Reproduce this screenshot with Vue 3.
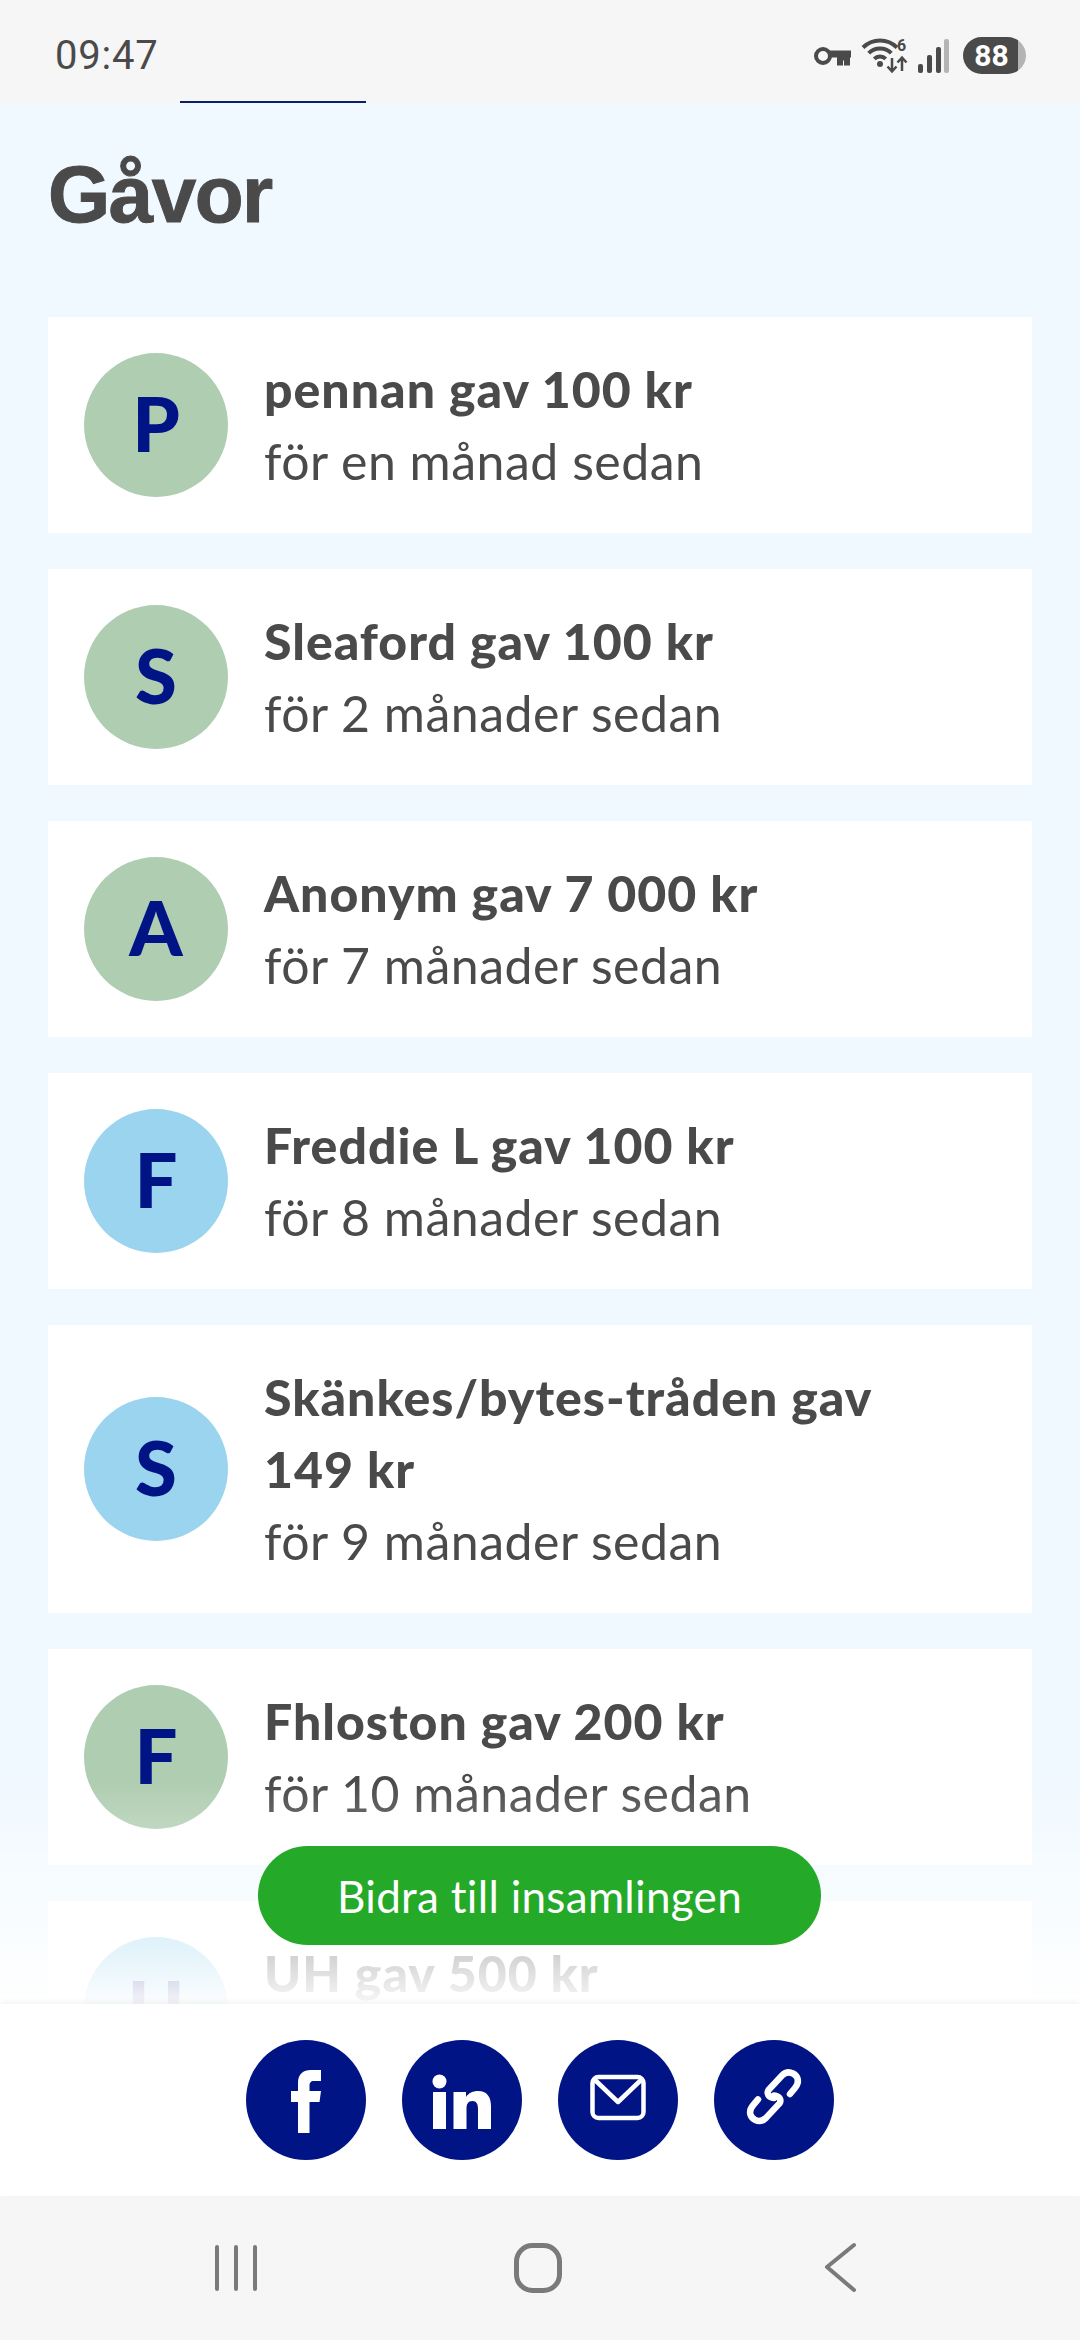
<template>
  <div class="phone">
    <header class="status">
      <span class="status__time">09:47</span>
      <div class="status__icons">
        <svg class="status__key" width="38" height="20" viewBox="0 0 38 20">
          <circle cx="9" cy="9" r="7" fill="none" stroke="#4a4a4a" stroke-width="4" />
          <path d="M15 3.500h22v7h-1v8h-6v-5h-1v5h-6v-8h-8z" fill="#4a4a4a" />
        </svg>
        <svg class="status__wifi" width="50" height="36" viewBox="0 0 50 36">
          <path d="M2 9.500a24 24 0 0 1 34 0M7.700 15.200a16 16 0 0 1 22.600 0M13.300 20.800a8 8 0 0 1 11.400 0" fill="none" stroke="#4a4a4a" stroke-width="4" />
          <circle cx="19" cy="26" r="3" fill="#4a4a4a" />
          <path d="M31 20v13M26.500 28.500l4.500 5 4.500-5M41 33V20M36.500 24.500l4.500-5 4.500 5" fill="none" stroke="#4a4a4a" stroke-width="2.500" />
          <text x="36" y="13" class="status__net">6</text>
        </svg>
        <svg class="status__signal" width="32" height="34" viewBox="0 0 32 34">
          <rect x="0" y="25" width="5" height="9" rx="2" fill="#4a4a4a" />
          <rect x="9" y="16" width="5" height="18" rx="2" fill="#4a4a4a" />
          <rect x="18" y="8" width="5" height="26" rx="2" fill="#4a4a4a" />
          <rect x="26" y="0" width="5" height="34" rx="2" fill="#b4b4b4" />
        </svg>
        <div class="status__battery"><span>88</span></div>
      </div>
      <i class="status__line"></i>
    </header>

    <main class="gifts">
      <h1>Gåvor</h1>
      <ul class="gifts__list">
        <li v-for="gift in gifts" :key="gift.title" class="gift">
          <div class="gift__avatar" :class="gift.tone">{{ gift.title[0].toUpperCase() }}</div>
          <div class="gift__text">
            <strong>{{ gift.title }}</strong>
            <span>{{ gift.time }}</span>
          </div>
        </li>
      </ul>
      <div class="gifts__fade"></div>
      <button class="gifts__cta" type="button">Bidra till insamlingen</button>
    </main>

    <section class="share">
      <a class="share__item" aria-label="Facebook">
        <svg width="120" height="120" viewBox="0 0 120 120">
          <path d="M52 93V62h-7V51h7v-8c0-9 5-13 13-13h10v11h-7c-3.500 0-4.500 2-4.500 5v5H75l-1.500 11h-10v31z" fill="#fff" />
        </svg>
      </a>
      <a class="share__item" aria-label="LinkedIn">
        <svg width="120" height="120" viewBox="0 0 120 120">
          <circle cx="37.500" cy="41.500" r="7" fill="#fff" />
          <rect x="31" y="52" width="13" height="37" fill="#fff" />
          <path d="M51.500 89V52H64v5c2.500-4 7-6 12-6 9 0 13 6 13 15v23H76V69c0-5-1.500-8-5.500-8-4.500 0-6 3-6 8v20z" fill="#fff" />
        </svg>
      </a>
      <a class="share__item" aria-label="E-post">
        <svg width="120" height="120" viewBox="0 0 120 120" fill="none" stroke="#fff" stroke-width="4.500" stroke-linejoin="round">
          <rect x="34.500" y="37" width="51" height="41" rx="6" />
          <path d="M37 40l23 22 23-22" />
        </svg>
      </a>
      <a class="share__item" aria-label="Kopiera länk">
        <svg width="120" height="120" viewBox="0 0 120 120" fill="none" stroke="#fff" stroke-width="6.500" stroke-linecap="round" stroke-linejoin="round">
          <path d="M76 54l5-6c5-6 3-12-2-14.500-4-2-8-1-11 2L54.500 50c-2 3-.5 7.500 5.500 8" />
          <path d="M44 59.400l-5 6c-5 6-3 12 2 14.500 4 2 8 1 11-2l13.500-14.500c2-3 .5-7.500-5.500-8" />
        </svg>
      </a>
    </section>

    <nav class="navbar">
      <svg width="60" height="60" viewBox="0 0 60 60" fill="none" stroke="#7a7a7a" stroke-width="4" stroke-linecap="round">
        <path d="M11 9v42M30 9v42M49 9v42" />
      </svg>
      <svg width="60" height="60" viewBox="0 0 60 60" fill="none" stroke="#7a7a7a" stroke-width="5">
        <rect x="8.500" y="7.500" width="43" height="45" rx="16" />
      </svg>
      <svg width="60" height="60" viewBox="0 0 60 60" fill="none" stroke="#7a7a7a" stroke-width="4" stroke-linecap="round" stroke-linejoin="round">
        <path d="M44 7L17 29l27 23" />
      </svg>
    </nav>
  </div>
</template>

<script setup>
const gifts = [
  { title: 'pennan gav 100 kr', time: 'för en månad sedan', tone: 'green' },
  { title: 'Sleaford gav 100 kr', time: 'för 2 månader sedan', tone: 'green' },
  { title: 'Anonym gav 7 000 kr', time: 'för 7 månader sedan', tone: 'green' },
  { title: 'Freddie L gav 100 kr', time: 'för 8 månader sedan', tone: 'blue' },
  { title: 'Skänkes/bytes-tråden gav 149 kr', time: 'för 9 månader sedan', tone: 'blue' },
  { title: 'Fhloston gav 200 kr', time: 'för 10 månader sedan', tone: 'green' },
  { title: 'UH gav 500 kr', time: '\u00a0', tone: 'blue' }
]
</script>

<style>
html,
body {
  margin: 0;
  background: #f0f9ff;
}
</style>

<style scoped>
.phone {
  display: flex;
  flex-direction: column;
  width: 1080px;
  height: 2340px;
  overflow: hidden;
  font-family: Lato, "Liberation Sans", sans-serif;
  color: #4a4a4a;
}

.status {
  position: relative;
  display: flex;
  flex: none;
  align-items: center;
  justify-content: space-between;
  height: 103px;
  padding: 8px 54px 0 55px;
  box-sizing: border-box;
  background: #f6f6f6;
}

.status__time {
  font-family: Roboto, sans-serif;
  font-size: 40px;
  letter-spacing: 0.800px;
}

.status__icons {
  display: flex;
  align-items: center;
  height: 40px;
}

.status__key {
  margin: 2px 9px 0 0;
}

.status__wifi {
  margin: 0 7px 0 0;
  overflow: visible;
}

.status__net {
  font-family: Roboto, sans-serif;
  font-size: 16px;
  font-weight: 700;
  fill: #4a4a4a;
}

.status__signal {
  margin: 0 13px 0 0;
}

.status__battery {
  display: flex;
  align-items: center;
  justify-content: center;
  width: 63px;
  height: 37px;
  padding-right: 6px;
  box-sizing: border-box;
  border-radius: 19px;
  background: linear-gradient(90deg, #4a4a4a 88%, #b4b4b4 88%);
  color: #fff;
  font-family: Roboto, sans-serif;
  font-size: 30px;
  font-weight: 700;
}

.status__line {
  position: absolute;
  left: 180px;
  bottom: 0;
  width: 186px;
  height: 2px;
  background: #0c1f66;
}

.gifts {
  position: relative;
  flex: 1;
  min-height: 0;
  overflow: hidden;
  padding: 0 48px;
  background: #f0f9ff;
}

.gifts h1 {
  margin: 44px 0 74px;
  font-family: "Liberation Sans", sans-serif;
  font-size: 80px;
  line-height: 96px;
  font-weight: 700;
  letter-spacing: -1.500px;
  -webkit-text-stroke: 1px #4a4a4a;
}

.gifts__list {
  display: flex;
  flex-direction: column;
  gap: 36px;
  margin: 0;
  padding: 0;
  list-style: none;
}

.gift {
  display: flex;
  align-items: center;
  gap: 36px;
  padding: 36px;
  background: #fff;
}

.gift__avatar {
  display: flex;
  flex: none;
  align-items: center;
  justify-content: center;
  width: 144px;
  height: 144px;
  padding-bottom: 4px;
  box-sizing: border-box;
  border-radius: 50%;
  color: #001486;
  font-size: 76px;
  line-height: 1;
  font-weight: 900;
}

.gift__avatar.green {
  background: #afcdb1;
}

.gift__avatar.blue {
  background: #9ad4ef;
}

.gift__text {
  display: flex;
  flex-direction: column;
  flex: 1;
  padding-right: 100px;
  font-size: 50px;
  line-height: 72px;
}

.gift__text strong {
  font-weight: 900;
  letter-spacing: 1px;
}

.gift__text span {
  letter-spacing: 0.500px;
}

.gifts__fade {
  position: absolute;
  left: 0;
  right: 0;
  bottom: 0;
  height: 224px;
  background: linear-gradient(rgba(255, 255, 255, 0), rgba(255, 255, 255, 0.96));
}

.gifts__cta {
  position: absolute;
  left: 258px;
  bottom: 59px;
  width: 563px;
  height: 99px;
  padding: 0;
  border: 0;
  border-radius: 50px;
  background: #24a928;
  color: #fff;
  font-family: inherit;
  font-size: 44px;
  letter-spacing: 0.300px;
}

.share {
  position: relative;
  display: flex;
  flex: none;
  justify-content: center;
  gap: 36px;
  height: 192px;
  padding-top: 36px;
  box-sizing: border-box;
  background: #fff;
  box-shadow: 0 -2px 6px rgba(0, 0, 0, 0.05);
}

.share__item {
  display: block;
  width: 120px;
  height: 120px;
  border-radius: 50%;
  background: #001486;
}

.share__item svg {
  display: block;
}

.navbar {
  display: flex;
  flex: none;
  align-items: center;
  gap: 242px;
  height: 144px;
  padding-left: 206px;
  box-sizing: border-box;
  background: #f6f6f6;
}
</style>
